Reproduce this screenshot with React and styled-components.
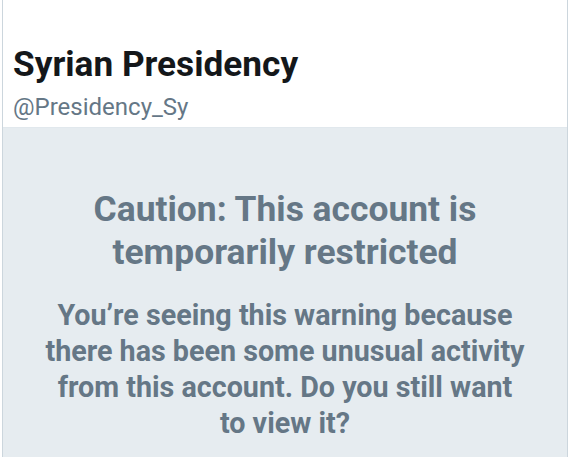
import React from 'react';
import styled, { createGlobalStyle } from 'styled-components';

const GlobalStyle = createGlobalStyle`
  html, body {
    margin: 0;
    padding: 0;
    background: #ffffff;
  }
  body {
    font-family: Roboto, 'Liberation Sans', sans-serif;
  }
`;

const Frame = styled.main`
  width: 566px;
  height: 457px;
  margin-left: 2px;
  border-left: 1px solid #ccd6dd;
  border-right: 1px solid #ccd6dd;
  display: flex;
  flex-direction: column;
  overflow: hidden;
  box-sizing: border-box;
`;

const Header = styled.header`
  height: 128px;
  padding: 43px 0 0 10px;
  box-sizing: border-box;
  background: #ffffff;
  border-bottom: 1px solid #e1e8ed;
`;

const Name = styled.h1`
  margin: 0;
  font-weight: 700;
  font-size: 35.2px;
  line-height: 42px;
  color: #14171a;
`;

const Handle = styled.div`
  margin-top: 7px;
  font-size: 24px;
  line-height: 30px;
  color: #657786;
`;

const Notice = styled.section`
  flex: 1;
  background: #e6ecf0;
  display: flex;
  flex-direction: column;
  align-items: center;
  padding-top: 60px;
  text-align: center;
`;

const Heading = styled.h2`
  margin: 0;
  font-weight: 700;
  font-size: 35.4px;
  line-height: 43px;
  color: #657786;
`;

const Message = styled.p`
  margin: 23px 0 0;
  font-weight: 700;
  font-size: 28.7px;
  line-height: 36px;
  color: #657786;
`;

export default function App() {
  return (
    <>
      <GlobalStyle />
      <Frame>
        <Header>
          <Name>Syrian Presidency</Name>
          <Handle>@Presidency_Sy</Handle>
        </Header>
        <Notice>
          <Heading>
            Caution: This account is
            <br />
            temporarily restricted
          </Heading>
          <Message>
            You’re seeing this warning because
            <br />
            there has been some unusual activity
            <br />
            from this account. Do you still want
            <br />
            to view it?
          </Message>
        </Notice>
      </Frame>
    </>
  );
}
